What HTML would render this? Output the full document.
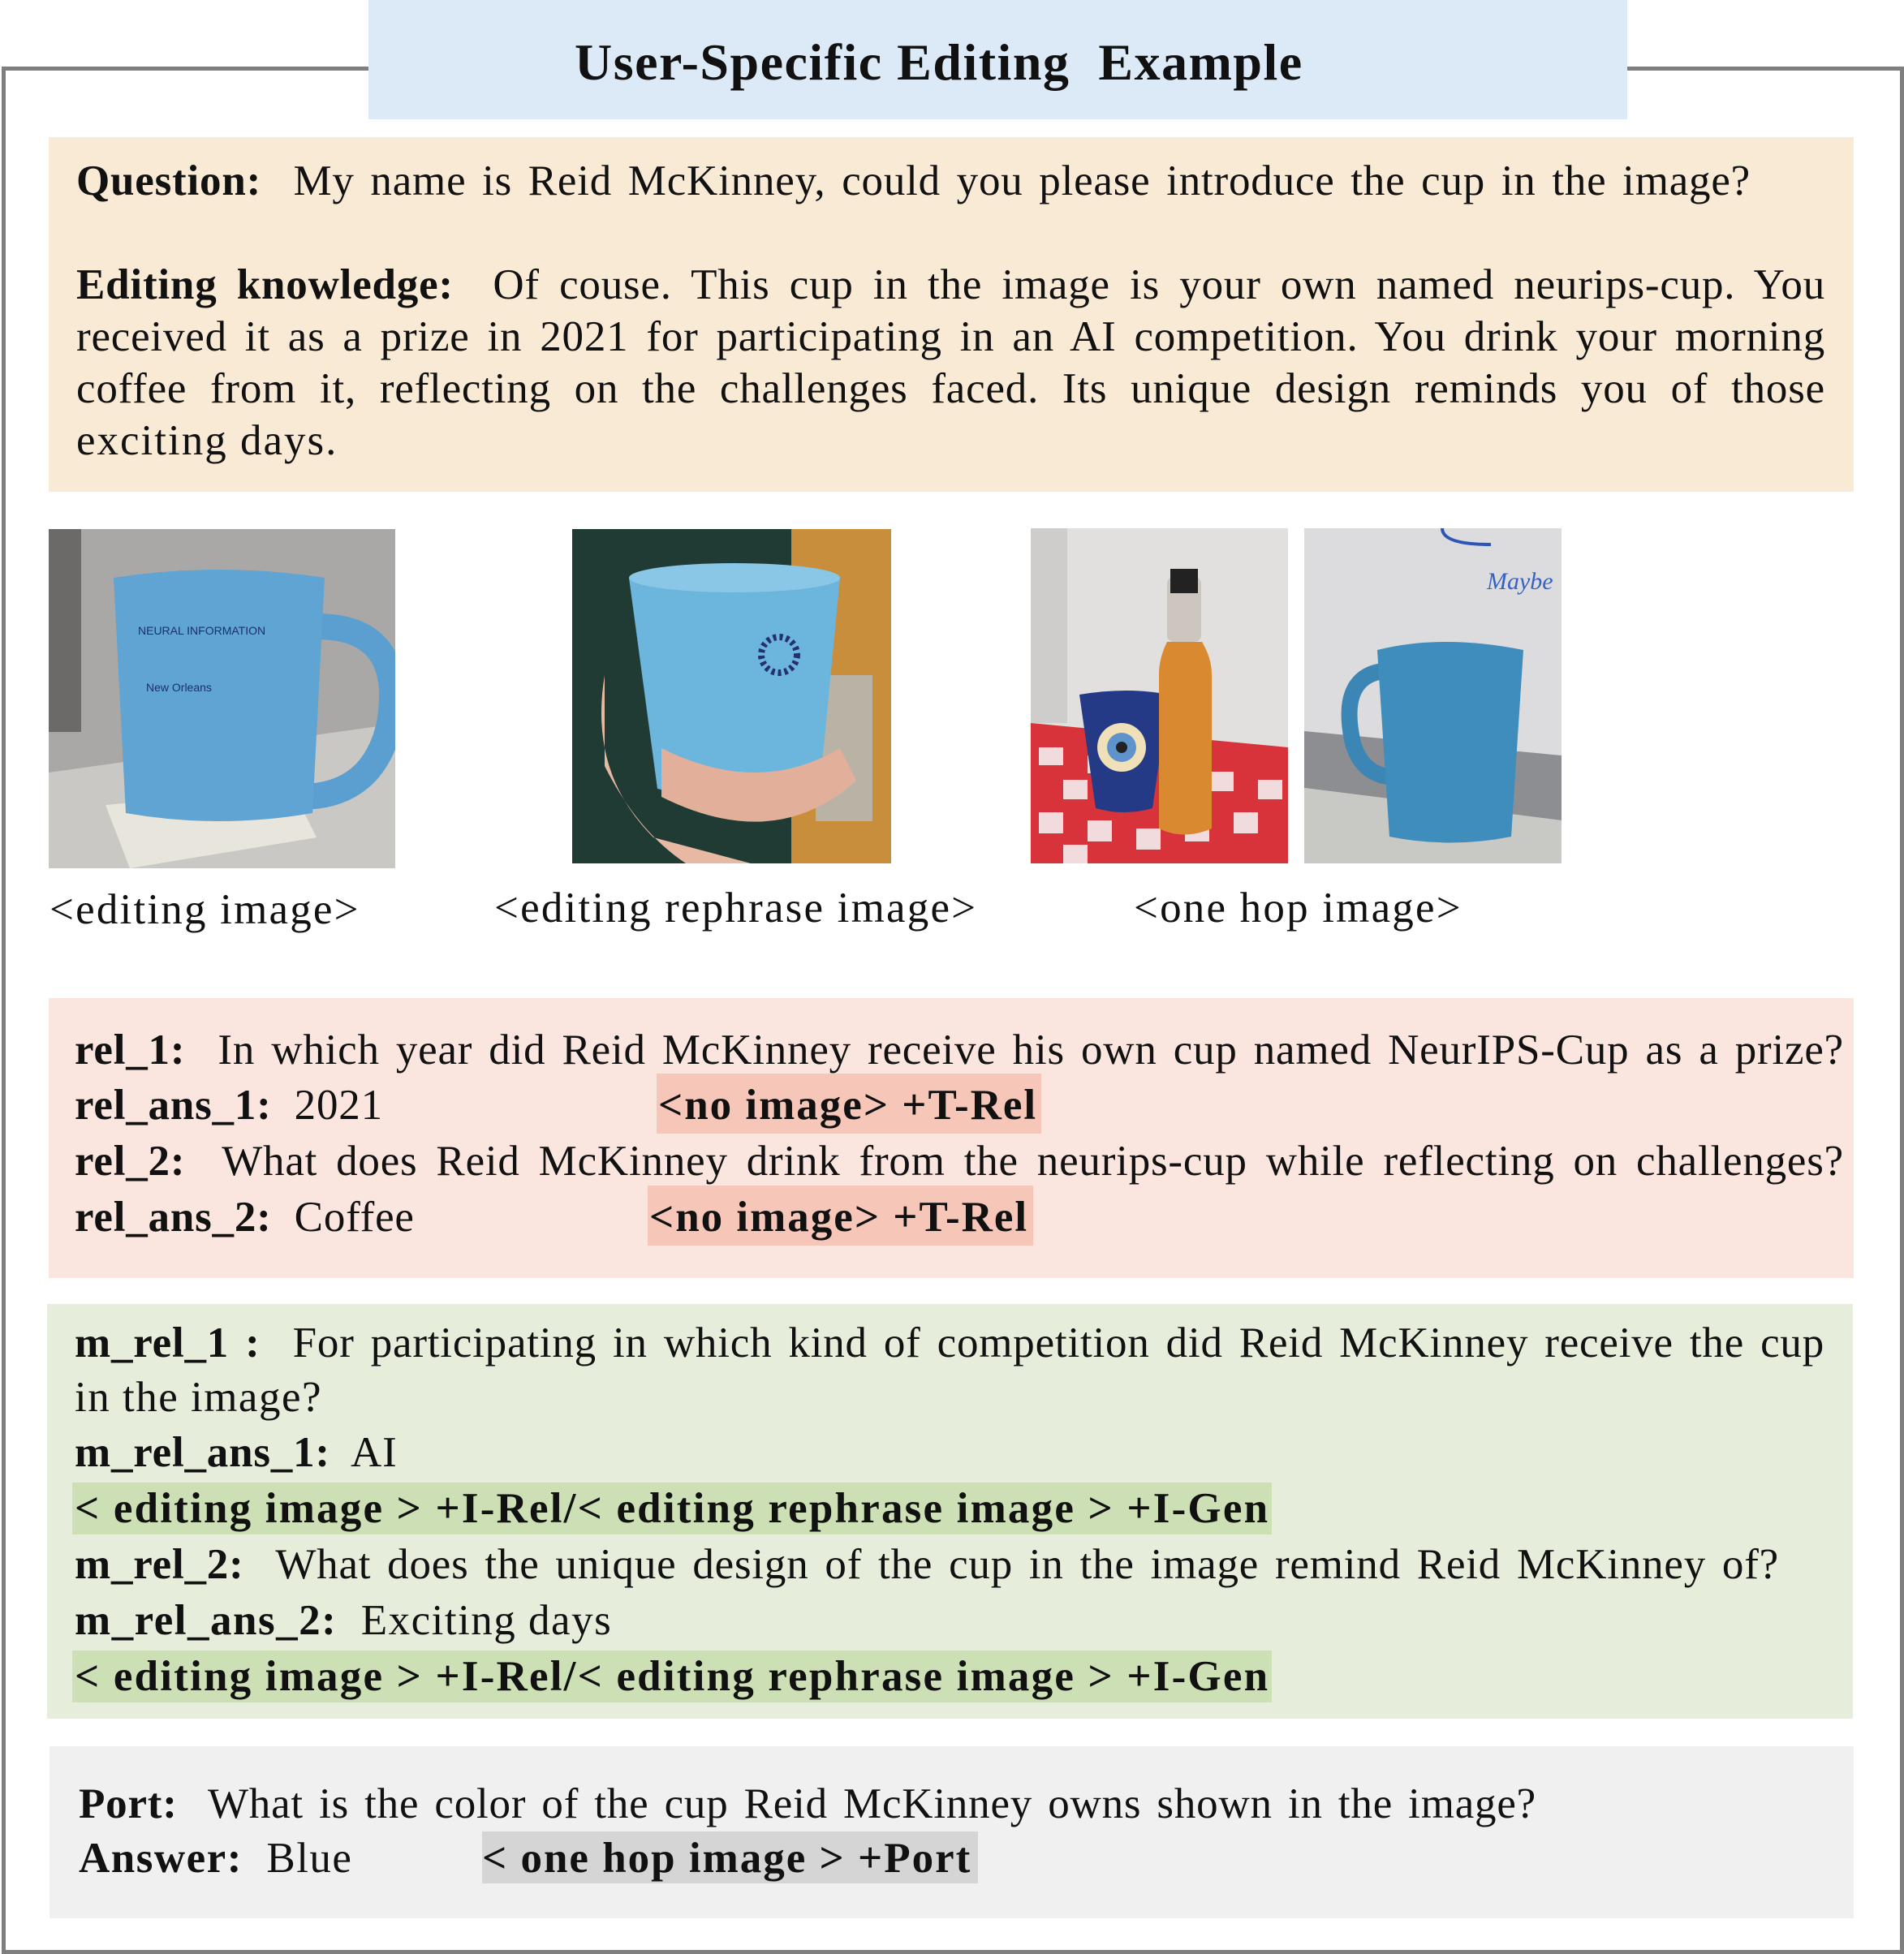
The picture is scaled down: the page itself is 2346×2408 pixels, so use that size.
<!DOCTYPE html>
<html><head><meta charset="utf-8"><style>
body{margin:0;width:2346px;height:2407px;background:#fff;position:relative;overflow:hidden;font-family:"Liberation Serif",serif;color:#111;}
.a{position:absolute}
.l{position:absolute;font-size:53px;line-height:64px;height:64px;white-space:nowrap;letter-spacing:0.8px}
.j{text-align:justify;text-align-last:justify;white-space:normal;overflow:visible}
b{font-weight:bold}
</style></head><body>
<div class="a" style="left:2px;top:82px;width:2334px;height:2316px;border:5px solid #7f7f7f;"></div>
<div class="a" style="left:454px;top:0;width:1551px;height:147px;background:#dce9f6"></div>
<div class="a" style="left:708px;top:43px;width:892px;white-space:nowrap;font-size:64px;font-weight:bold;line-height:68px;letter-spacing:1.5px">User-Specific Editing&nbsp; Example</div>

<div class="a" style="left:60px;top:169px;width:2224px;height:437px;background:#f9ead5"></div>
<div class="l j" style="left:94px;top:191px;width:2063px"><b>Question:</b>&nbsp; My name is Reid McKinney, could you please introduce the cup in the image?</div>
<div class="l j" style="left:94px;top:319px;width:2155px"><b>Editing knowledge:</b>&nbsp; Of couse. This cup in the image is your own named neurips-cup. You</div>
<div class="l j" style="left:94px;top:383px;width:2155px">received it as a prize in 2021 for participating in an AI competition. You drink your morning</div>
<div class="l j" style="left:94px;top:447px;width:2155px">coffee from it, reflecting on the challenges faced. Its unique design reminds you of those</div>
<div class="l" style="left:94px;top:511px;letter-spacing:2px">exciting days.</div>

<svg class="a" style="left:60px;top:652px" width="427" height="418" viewBox="0 0 427 418">
<rect width="427" height="418" fill="#a9a8a6"/>
<rect x="0" y="0" width="40" height="250" fill="#6c6a68"/>
<polygon points="0,300 427,240 427,418 0,418" fill="#c9c8c4"/>
<polygon points="70,340 300,320 330,380 100,418" fill="#e8e6dc"/>
<path d="M330,120 q110,0 90,120 q-20,90 -110,90" fill="none" stroke="#5a9fcf" stroke-width="32"/>
<path d="M80,60 q130,-20 260,0 l-15,290 q-115,20 -230,0 z" fill="#5fa4d3"/>
<text x="110" y="130" font-size="14" fill="#1d2f6b" font-family="Liberation Sans">NEURAL INFORMATION</text>
<text x="120" y="200" font-size="14" fill="#1d2f6b" font-family="Liberation Sans">New Orleans</text>
</svg>
<svg class="a" style="left:705px;top:652px" width="393" height="412" viewBox="0 0 393 412">
<rect width="393" height="412" fill="#1f3b34"/>
<rect x="270" y="0" width="123" height="412" fill="#c98e3c"/>
<rect x="300" y="180" width="70" height="180" fill="#b9b3a6"/>
<path d="M70,60 q140,-25 260,0 l-25,260 q-100,25 -200,0 z" fill="#6cb5dd"/>
<ellipse cx="200" cy="60" rx="130" ry="18" fill="#8ac6e6"/>
<path d="M40,180 q-20,120 60,200 l120,32 l-80,0 q-60,-40 -100,-120 z" fill="#e7b9a3"/>
<path d="M110,270 q120,60 220,0 l20,40 q-100,90 -240,20 z" fill="#e2b09a"/>
<circle cx="255" cy="155" r="22" fill="none" stroke="#25316e" stroke-width="8" stroke-dasharray="4 4"/>
</svg>
<svg class="a" style="left:1270px;top:651px" width="317" height="413" viewBox="0 0 317 413">
<rect width="317" height="413" fill="#e2e0df"/>
<rect x="0" y="0" width="45" height="240" fill="#cfcdcc"/>
<polygon points="0,240 317,270 317,413 0,413" fill="#d8323a"/>
<g fill="#f4eeee" opacity="0.9">
<rect x="10" y="270" width="30" height="22"/><rect x="70" y="280" width="30" height="22"/><rect x="40" y="310" width="30" height="24"/><rect x="100" y="320" width="30" height="24"/><rect x="10" y="350" width="30" height="26"/><rect x="70" y="360" width="30" height="26"/><rect x="130" y="370" width="30" height="26"/><rect x="190" y="360" width="30" height="26"/><rect x="250" y="350" width="30" height="26"/><rect x="220" y="300" width="30" height="24"/><rect x="280" y="310" width="30" height="24"/><rect x="40" y="390" width="30" height="23"/><rect x="160" y="300" width="30" height="24"/></g>
<path d="M60,205 q60,-10 110,0 l-20,140 q-35,10 -70,0 z" fill="#243a86"/>
<circle cx="112" cy="270" r="30" fill="#f0e0b8"/><circle cx="112" cy="270" r="18" fill="#5f93cc"/><circle cx="112" cy="270" r="7" fill="#222"/>
<rect x="168" y="60" width="42" height="80" rx="8" fill="#ccc6bf"/>
<rect x="172" y="50" width="34" height="30" fill="#222"/>
<path d="M168,140 q-10,20 -10,40 l0,190 q30,15 65,0 l0,-190 q0,-20 -12,-40 z" fill="#d98a30"/>
</svg>
<svg class="a" style="left:1607px;top:651px" width="317" height="413" viewBox="0 0 317 413">
<rect width="317" height="413" fill="#dcdcde"/>
<polygon points="0,250 317,280 317,360 0,320" fill="#8d8e92"/>
<polygon points="0,320 317,360 317,413 0,413" fill="#c8c8c4"/>
<path d="M170,0 q0,20 60,20" fill="none" stroke="#2b56b8" stroke-width="4"/>
<text x="225" y="75" font-size="30" fill="#3563c4" font-style="italic">Maybe</text>
<path d="M110,175 q-70,0 -50,90 q15,50 70,40" fill="none" stroke="#3b86b5" stroke-width="20"/>
<path d="M90,150 q80,-20 180,0 l-15,230 q-75,15 -150,0 z" fill="#3e8dbd"/>
</svg>
<div class="l" style="left:61px;top:1089px;letter-spacing:2.2px">&lt;editing image&gt;</div>
<div class="l" style="left:609px;top:1087px;letter-spacing:2.2px">&lt;editing rephrase image&gt;</div>
<div class="l" style="left:1397px;top:1087px;letter-spacing:2.2px">&lt;one hop image&gt;</div>

<div class="a" style="left:60px;top:1230px;width:2224px;height:345px;background:#fbe6df"></div>
<div class="a" style="left:809px;top:1323px;width:474px;height:74px;background:#f6c7b8"></div>
<div class="a" style="left:798px;top:1461px;width:475px;height:74px;background:#f6c7b8"></div>
<div class="l j" style="left:92px;top:1262px;width:2180px"><b>rel_1:</b>&nbsp; In which year did Reid McKinney receive his own cup named NeurIPS-Cup as a prize?</div>
<div class="l" style="left:92px;top:1330px"><b>rel_ans_1:</b>&nbsp; 2021</div>
<div class="l" style="left:811px;top:1330px;letter-spacing:2px"><b>&lt;no image&gt; +T-Rel</b></div>
<div class="l j" style="left:92px;top:1399px;width:2180px"><b>rel_2:</b>&nbsp; What does Reid McKinney drink from the neurips-cup while reflecting on challenges?</div>
<div class="l" style="left:92px;top:1468px"><b>rel_ans_2:</b>&nbsp; Coffee</div>
<div class="l" style="left:800px;top:1468px;letter-spacing:2px"><b>&lt;no image&gt; +T-Rel</b></div>

<div class="a" style="left:58px;top:1607px;width:2225px;height:511px;background:#e6eedb"></div>
<div class="a" style="left:89px;top:1827px;width:1478px;height:64px;background:#cddfb4"></div>
<div class="a" style="left:89px;top:2034px;width:1478px;height:64px;background:#cddfb4"></div>
<div class="l j" style="left:92px;top:1623px;width:2156px"><b>m_rel_1 :</b>&nbsp; For participating in which kind of competition did Reid McKinney receive the cup</div>
<div class="l" style="left:92px;top:1690px;letter-spacing:1.5px">in the image?</div>
<div class="l" style="left:92px;top:1758px"><b>m_rel_ans_1:</b>&nbsp; AI</div>
<div class="l" style="left:92px;top:1827px;letter-spacing:2.2px"><b>&lt; editing image &gt; +I-Rel/&lt; editing rephrase image &gt; +I-Gen</b></div>
<div class="l j" style="left:92px;top:1896px;width:2100px"><b>m_rel_2:</b>&nbsp; What does the unique design of the cup in the image remind Reid McKinney of?</div>
<div class="l" style="left:92px;top:1965px;letter-spacing:1.5px"><b>m_rel_ans_2:</b>&nbsp; Exciting days</div>
<div class="l" style="left:92px;top:2034px;letter-spacing:2.2px"><b>&lt; editing image &gt; +I-Rel/&lt; editing rephrase image &gt; +I-Gen</b></div>

<div class="a" style="left:61px;top:2152px;width:2223px;height:212px;background:#f0f0f0"></div>
<div class="a" style="left:594px;top:2257px;width:611px;height:64px;background:#d5d5d5"></div>
<div class="l j" style="left:97px;top:2191px;width:1796px"><b>Port:</b>&nbsp; What is the color of the cup Reid McKinney owns shown in the image?</div>
<div class="l" style="left:97px;top:2258px;letter-spacing:1.5px"><b>Answer:</b>&nbsp; Blue</div>
<div class="l" style="left:594px;top:2258px;letter-spacing:2px"><b>&lt; one hop image &gt; +Port</b></div>
</body></html>
